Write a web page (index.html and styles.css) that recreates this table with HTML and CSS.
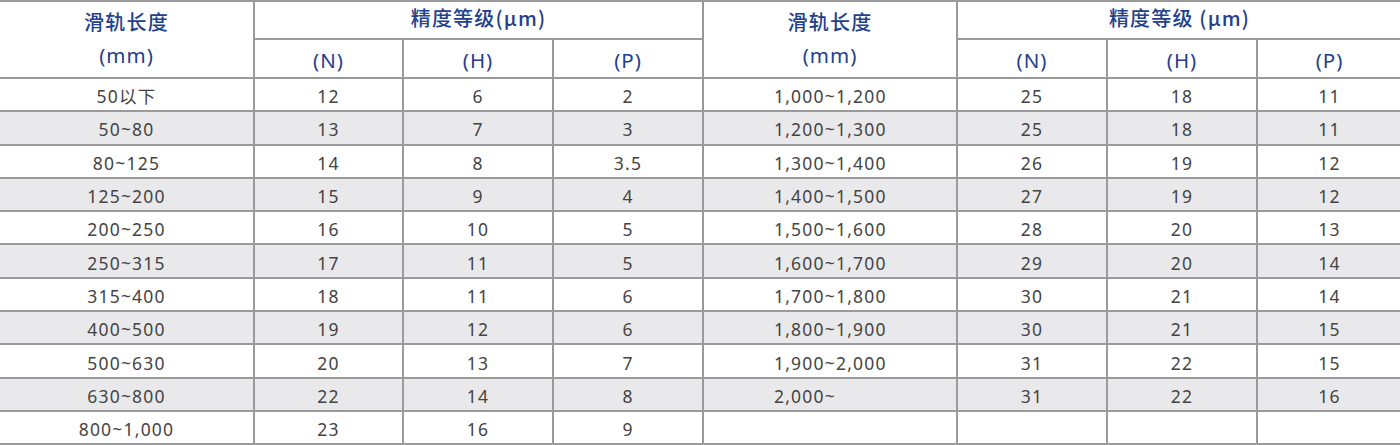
FILE: index.html
```html
<!DOCTYPE html>
<html lang="zh">
<head>
<meta charset="utf-8">
<title>精度等级</title>
<link rel="stylesheet" href="styles.css">
</head>
<body>
<table class="spec">
  <colgroup>
    <col class="c-len">
    <col class="c-v1">
    <col class="c-v">
    <col class="c-v">
    <col class="c-len">
    <col class="c-v">
    <col class="c-v">
    <col class="c-vlast">
  </colgroup>
  <thead>
    <tr class="h1">
      <th rowspan="2" class="len-h"><span class="zh">滑轨长度</span><br><span class="unit">(mm)</span></th>
      <th colspan="3" class="zh grp">精度等级(μm)</th>
      <th rowspan="2" class="len-h"><span class="zh">滑轨长度</span><br><span class="unit">(mm)</span></th>
      <th colspan="3" class="zh grp">精度等级 (μm)</th>
    </tr>
    <tr class="h2">
      <th>(N)</th><th>(H)</th><th>(P)</th>
      <th>(N)</th><th>(H)</th><th>(P)</th>
    </tr>
  </thead>
  <tbody>
    <tr><td>50以下</td><td>12</td><td>6</td><td>2</td><td class="left">1,000~1,200</td><td>25</td><td>18</td><td>11</td></tr>
    <tr><td>50~80</td><td>13</td><td>7</td><td>3</td><td class="left">1,200~1,300</td><td>25</td><td>18</td><td>11</td></tr>
    <tr><td>80~125</td><td>14</td><td>8</td><td>3.5</td><td class="left">1,300~1,400</td><td>26</td><td>19</td><td>12</td></tr>
    <tr><td>125~200</td><td>15</td><td>9</td><td>4</td><td class="left">1,400~1,500</td><td>27</td><td>19</td><td>12</td></tr>
    <tr><td>200~250</td><td>16</td><td>10</td><td>5</td><td class="left">1,500~1,600</td><td>28</td><td>20</td><td>13</td></tr>
    <tr><td>250~315</td><td>17</td><td>11</td><td>5</td><td class="left">1,600~1,700</td><td>29</td><td>20</td><td>14</td></tr>
    <tr><td>315~400</td><td>18</td><td>11</td><td>6</td><td class="left">1,700~1,800</td><td>30</td><td>21</td><td>14</td></tr>
    <tr><td>400~500</td><td>19</td><td>12</td><td>6</td><td class="left">1,800~1,900</td><td>30</td><td>21</td><td>15</td></tr>
    <tr><td>500~630</td><td>20</td><td>13</td><td>7</td><td class="left">1,900~2,000</td><td>31</td><td>22</td><td>15</td></tr>
    <tr><td>630~800</td><td>22</td><td>14</td><td>8</td><td class="left">2,000~</td><td>31</td><td>22</td><td>16</td></tr>
    <tr><td>800~1,000</td><td>23</td><td>16</td><td>9</td><td class="left"></td><td></td><td></td><td></td></tr>
  </tbody>
</table>
</body>
</html>
```
FILE: styles.css
```css
html, body {
  margin: 0;
  padding: 0;
  background: #ffffff;
}
body {
  font-family: "Noto Sans", "Noto Sans CJK SC", sans-serif;
  color: #444444;
}
.spec {
  width: 1400px;
  table-layout: fixed;
  border-collapse: collapse;
}
.c-len { width: 254px; }
.c-v1 { width: 149px; }
.c-v { width: 150px; }
.c-vlast { width: 144px; }
.spec th, .spec td {
  border: 2px solid #9a9a9c;
  text-align: center;
  padding: 0;
  white-space: nowrap;
  overflow: hidden;
  vertical-align: middle;
}
.spec tr > :first-child { border-left: none; }
.spec tr > :last-child { border-right: none; }
.spec th {
  color: #22408c;
  font-weight: 400;
  font-size: 20.5px;
  line-height: 24px;
  letter-spacing: 1px;
}
.spec .zh {
  font-family: "Noto Sans CJK SC", sans-serif;
  font-weight: 500;
  font-size: 20px;
  letter-spacing: 1.2px;
}
.h1 { height: 38px; }
.spec th.grp { padding-bottom: 4px; }
.h2 { height: 39px; }
.h2 th { padding-top: 2px; }
.spec th.len-h { line-height: 33px; padding-bottom: 2px; }
.unit { font-size: 20.5px; }
.spec tbody tr { height: 33.3px; }
.spec td {
  font-size: 17.5px;
  line-height: 22px;
  letter-spacing: 1.2px;
  padding-top: 3px;
}
.spec tbody tr:nth-child(even) td { background: #e9e9eb; }
.spec td.left { text-align: left; padding-left: 70px; }
```
